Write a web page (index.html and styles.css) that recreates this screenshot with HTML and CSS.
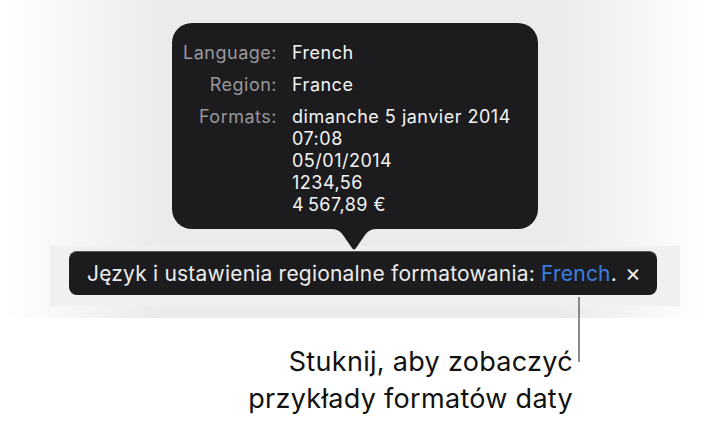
FILE: index.html
```html
<!DOCTYPE html>
<html lang="pl">
<head>
<meta charset="utf-8">
<link rel="stylesheet" href="styles.css">
</head>
<body>
<div class="stage">
  <div class="popup">
    <div class="grid">
      <div class="label">Language:</div>
      <div class="value">French</div>
      <div class="label">Region:</div>
      <div class="value">France</div>
      <div class="label">Formats:</div>
      <div class="value">dimanche 5 janvier 2014<br>07:08<br>05/01/2014<br>1234,56<br>4&#8239;567,89&nbsp;€</div>
    </div>
    <svg class="arrow" width="50" height="22" viewBox="0 0 50 22"><path d="M0 0 C8 0 10 1 14 6 L23 19 Q25 22 27 19 L36 6 C40 1 42 0 50 0 Z" fill="#1c1c1e"/></svg>
  </div>
  <div class="barwrap">
    <div class="bar">Język i ustawienia regionalne formatowania: <span class="link">French</span>.<span class="close">×</span></div>
  </div>
</div>
<div class="callout">
  <div class="leader"></div>
  <div class="note">Stuknij, aby zobaczyć<br>przykłady formatów daty</div>
</div>
</body>
</html>
```
FILE: styles.css
```css
html, body {
  margin: 0;
  padding: 0;
  background: #ffffff;
}
body {
  width: 708px;
  height: 422px;
  overflow: hidden;
  font-family: Inter, "Liberation Sans", sans-serif;
}
.stage {
  height: 318px;
  box-sizing: border-box;
  padding-top: 23px;
  background: linear-gradient(to right, #ffffff 0px, #ebebeb 160px, #ebebeb 560px, #ffffff 708px);
}
.popup {
  position: relative;
  margin-left: 172px;
  width: 366px;
  box-sizing: border-box;
  background: #1c1c1e;
  border-radius: 20px;
  padding: 19px 0 13px 0;
}
.grid {
  display: grid;
  grid-template-columns: 105px 1fr;
  column-gap: 15px;
  row-gap: 10px;
  font-size: 18px;
  letter-spacing: 0.5px;
  line-height: 22px;
}
.label {
  text-align: right;
  color: #98989d;
}
.value {
  color: #f4f4f4;
}
.arrow {
  position: absolute;
  left: 157px;
  top: 100%;
  display: block;
}
.barwrap {
  margin-top: 17px;
  margin-left: 50px;
  width: 630px;
  box-sizing: border-box;
  padding: 5px 0 11px 19px;
  background: #f0f0f0;
}
.bar {
  width: 588px;
  height: 44px;
  box-sizing: border-box;
  background: #1c1c1e;
  border-radius: 8px;
  border-top: 1px solid #555;
  padding-left: 18px;
  color: #ececec;
  font-size: 21px;
  letter-spacing: 0.2px;
  line-height: 42px;
  white-space: nowrap;
}
.link {
  color: #3a7ee0;
}
.close {
  margin-left: 8px;
  color: #f4f4f4;
  font-size: 24px;
}
.callout {
  position: relative;
}
.leader {
  position: absolute;
  left: 578px;
  top: -21px;
  width: 2px;
  height: 65px;
  background: #8a8a8a;
}
.note {
  width: 573px;
  padding-top: 25px;
  text-align: right;
  font-size: 27px;
  letter-spacing: 0.3px;
  line-height: 37px;
  color: #111111;
}
```
